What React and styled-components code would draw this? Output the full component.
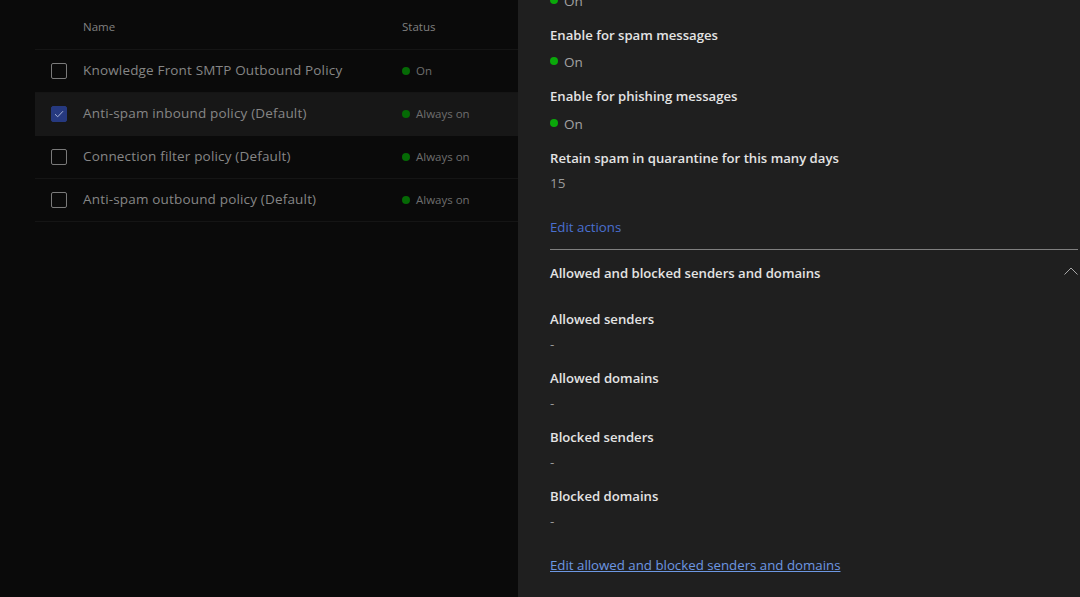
import React from 'react'
import styled, { createGlobalStyle } from 'styled-components'

const policies = [
    { name: 'Knowledge Front SMTP Outbound Policy', status: 'On' },
    { name: 'Anti-spam inbound policy (Default)', status: 'Always on', selected: true },
    { name: 'Connection filter policy (Default)', status: 'Always on' },
    { name: 'Anti-spam outbound policy (Default)', status: 'Always on' },
]

const lists = ['Allowed senders', 'Allowed domains', 'Blocked senders', 'Blocked domains']

const App = () => {
    return (
        <Page>
            <GlobalStyle />
            <ListPane>
                <HeaderRow>
                    <HeaderName>Name</HeaderName>
                    <HeaderStatus>Status</HeaderStatus>
                </HeaderRow>
                {policies.map((p) => (
                    <PolicyRow key={p.name} selected={p.selected}>
                        <CheckBox selected={p.selected}>
                            {p.selected && (
                                <svg width="10" height="8" viewBox="0 0 10 8" fill="none">
                                    <path d="M1 4.2 L3.7 6.8 L9 1.2" stroke="#a9b5d8" strokeWidth="1" />
                                </svg>
                            )}
                        </CheckBox>
                        <PolicyName>{p.name}</PolicyName>
                        <RowStatus>
                            <DimDot />
                            {p.status}
                        </RowStatus>
                    </PolicyRow>
                ))}
            </ListPane>
            <DetailPane>
                <TopCut>
                    <Dot />
                    <OnText>On</OnText>
                </TopCut>
                <Label>Enable for spam messages</Label>
                <OnLine>
                    <Dot />
                    <OnText>On</OnText>
                </OnLine>
                <Label>Enable for phishing messages</Label>
                <OnLine>
                    <Dot />
                    <OnText>On</OnText>
                </OnLine>
                <Label>Retain spam in quarantine for this many days</Label>
                <Value>15</Value>
                <EditLink href="#">Edit actions</EditLink>
                <Divider />
                <SectionHead>
                    <SectionTitle>Allowed and blocked senders and domains</SectionTitle>
                    <Chevron width="14" height="8" viewBox="0 0 14 8" fill="none">
                        <path d="M0.5 7.5 L7 1 L13.5 7.5" stroke="#a8a8a8" strokeWidth="1" />
                    </Chevron>
                </SectionHead>
                {lists.map((l) => (
                    <Field key={l}>
                        <Label>{l}</Label>
                        <Value>-</Value>
                    </Field>
                ))}
                <BottomLink href="#">Edit allowed and blocked senders and domains</BottomLink>
            </DetailPane>
        </Page>
    )
}

export default App

const GlobalStyle = createGlobalStyle`
    html, body {
        margin: 0;
        height: 100%;
        background: #0a0a0a;
        overflow: hidden;
    }
    * {
        box-sizing: border-box;
    }
`

const Page = styled.div`
    width: 1080px;
    height: 597px;
    display: flex;
    overflow: hidden;
    font-family: "Open Sans", "Noto Sans", sans-serif;
`

const ListPane = styled.div`
    width: 518px;
    flex-shrink: 0;
    padding-left: 35px;
    background: #0a0a0a;
`

const HeaderRow = styled.div`
    height: 50px;
    display: flex;
    align-items: center;
    padding-top: 4px;
    font-size: 11.5px;
    color: #808080;
    border-bottom: 1px solid #151515;
`

const HeaderName = styled.div`
    margin-left: 48px;
    width: 319px;
`

const HeaderStatus = styled.div``

const PolicyRow = styled.div`
    height: 43px;
    display: flex;
    align-items: center;
    background: ${props => props.selected ? '#171717' : 'transparent'};
    border-bottom: 1px solid ${props => props.selected ? '#171717' : '#151515'};
`

const CheckBox = styled.div`
    width: 16px;
    height: 16px;
    margin-left: 16px;
    display: flex;
    align-items: center;
    justify-content: center;
    border-radius: 2px;
    border: 1px solid ${props => props.selected ? '#26397f' : '#7a7a7a'};
    background: ${props => props.selected ? '#26397f' : 'transparent'};
`

const PolicyName = styled.div`
    margin-left: 16px;
    width: 319px;
    padding-bottom: 2px;
    font-size: 13.5px;
    letter-spacing: 0.17px;
    color: #868686;
    white-space: nowrap;
`

const RowStatus = styled.div`
    display: flex;
    align-items: center;
    padding-bottom: 2px;
    font-size: 11.5px;
    color: #6e6e6e;
    white-space: nowrap;
`

const DimDot = styled.span`
    width: 8px;
    height: 8px;
    margin: 2px 6px 0 0;
    border-radius: 50%;
    background: #056a05;
`

const DetailPane = styled.div`
    flex: 1;
    padding: 0 2px 0 32px;
    background: #1f1f1f;
`

const OnLine = styled.div`
    height: 20px;
    margin: 7.3px 0 14px;
    display: flex;
    align-items: center;
`

const TopCut = styled(OnLine)`
    margin: -9px 0 14px;
`

const Dot = styled.span`
    width: 8px;
    height: 8px;
    margin: -2px 6px 0 0;
    border-radius: 50%;
    background: #0aa80a;
`

const OnText = styled.span`
    font-size: 13.5px;
    color: #a3a3a3;
`

const Label = styled.div`
    height: 20px;
    line-height: 20px;
    font-size: 13.15px;
    font-weight: 550;
    color: #e4e4e4;
    white-space: nowrap;
`

const Value = styled.div`
    height: 20px;
    line-height: 20px;
    margin-top: 5px;
    font-size: 13.5px;
    color: #9a9a9a;
`

const Field = styled.div`
    height: 59px;
`

const EditLink = styled.a`
    display: block;
    height: 20px;
    line-height: 20px;
    margin-top: 24px;
    font-size: 13.27px;
    color: #4a6fd0;
    text-decoration: none;
`

const Divider = styled.div`
    height: 1px;
    margin-top: 12px;
    background: #7f7f7f;
`

const SectionHead = styled.div`
    height: 20px;
    margin: 13px 0 26px;
    display: flex;
    align-items: center;
    justify-content: space-between;
`

const SectionTitle = styled(Label)``

const Chevron = styled.svg`
    margin-top: -3px;
`

const BottomLink = styled(EditLink)`
    width: fit-content;
    margin-top: 10px;
    color: #6d97e2;
    text-decoration: underline;
`
